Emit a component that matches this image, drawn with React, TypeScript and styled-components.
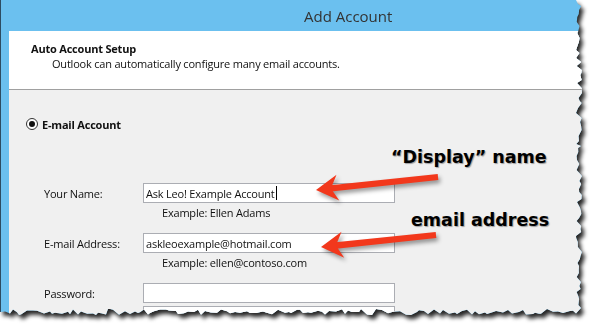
import React from "react";
import styled, { createGlobalStyle } from "styled-components";

const GlobalStyle = createGlobalStyle`
  html, body {
    margin: 0;
    padding: 0;
    background: #ffffff;
  }
  body {
    font-family: "Open Sans", "Noto Sans", sans-serif;
  }
`;

// deterministic jitter so the torn edge looks the same on every render
const seeded = (seed: number) => () => {
  seed = (seed * 16807) % 2147483647;
  return (seed - 1) / 2147483646;
};

const tornEdge = (w: number, h: number) => {
  const rnd = seeded(11);
  const pts: string[] = ["0px 0px"];
  const right = w - 10;
  const bottom = h - 11;
  for (let y = 0; y < bottom; y += 2 + Math.round(rnd() * 4)) {
    pts.push(`${(right + rnd() * 6).toFixed(1)}px ${y}px`);
  }
  for (let x = right; x > 0; x -= 2 + Math.round(rnd() * 5)) {
    pts.push(`${x}px ${(bottom + rnd() * 6).toFixed(1)}px`);
  }
  pts.push(`0px ${bottom + 3}px`);
  return `polygon(${pts.join(", ")})`;
};

const Page = styled.div`
  position: relative;
  width: 592px;
  height: 329px;
  overflow: hidden;
`;

const Shadow = styled.div`
  width: 586px;
  height: 320px;
  filter: drop-shadow(3px 4px 2px rgba(0, 0, 0, 0.85));
`;

const Window = styled.div`
  width: 100%;
  height: 100%;
  display: flex;
  flex-direction: column;
  box-sizing: border-box;
  background: #6bc0ef;
  border-left: 1px solid #2d4c62;
`;

const TitleBar = styled.div`
  height: 31px;
  flex: none;
  display: flex;
  align-items: center;
  padding-left: 303px;
  font-family: "Open Sans", sans-serif;
  font-size: 15px;
  color: #333333;
`;

const Body = styled.div`
  flex: 1;
  margin-left: 8px;
  background: #f0f0f0;
  display: flex;
  flex-direction: column;
  font-size: 11px;
  letter-spacing: -0.2px;
  color: #111111;
`;

const Header = styled.div`
  height: 59px;
  box-sizing: border-box;
  background: #ffffff;
  border-bottom: 1px solid #a0a0a0;
  padding: 10px 0 0 22px;
  line-height: 15px;
`;

const HeaderTitle = styled.div`
  font-weight: 700;
`;

const HeaderText = styled.div`
  padding-left: 21px;
`;

const Content = styled.div`
  padding: 27px 0 0 17px;
`;

const RadioRow = styled.div`
  display: flex;
  align-items: center;
  gap: 4px;
  font-weight: 700;
  height: 14px;
`;

const Radio = styled.span`
  width: 12px;
  height: 12px;
  box-sizing: border-box;
  border: 1px solid #333333;
  border-radius: 50%;
  background: #ffffff;
  display: flex;
  align-items: center;
  justify-content: center;
  &::after {
    content: "";
    width: 6px;
    height: 6px;
    border-radius: 50%;
    background: #111111;
  }
`;

const Form = styled.div`
  padding: 52px 0 0 18px;
  display: flex;
  flex-direction: column;
`;

const Field = styled.div<{ $gap: number }>`
  display: grid;
  grid-template-columns: 99px 252px;
  grid-template-rows: 20px auto;
  margin-bottom: ${p => p.$gap}px;
`;

const Label = styled.div`
  display: flex;
  align-items: center;
`;

const TextBox = styled.div`
  box-sizing: border-box;
  height: 20px;
  background: #ffffff;
  border: 1px solid #abadb3;
  padding-left: 2px;
  display: flex;
  align-items: center;
  white-space: nowrap;
`;

const Caret = styled.span`
  display: inline-block;
  width: 1px;
  height: 14px;
  background: #000000;
  margin-left: 1px;
`;

const Hint = styled.div`
  grid-column: 2;
  padding: 2px 0 0 19px;
  line-height: 16px;
`;

const Note = styled.div<{ $x: number; $y: number }>`
  position: absolute;
  left: ${p => p.$x}px;
  top: ${p => p.$y}px;
  font-family: "DejaVu Sans", Verdana, sans-serif;
  font-weight: 700;
  font-size: 17.5px;
  color: #000000;
  white-space: nowrap;
  text-shadow: 1px 1px 1px rgba(0, 0, 0, 0.35);
`;

const Arrows = styled.svg`
  position: absolute;
  left: 0;
  top: 0;
  filter: drop-shadow(2px 3px 2px rgba(0, 0, 0, 0.4));
`;

const Arrow = ({ tip, tail }: { tip: [number, number]; tail: [number, number] }) => {
  const dx = tail[0] - tip[0];
  const dy = tail[1] - tip[1];
  const len = Math.hypot(dx, dy);
  const ux = dx / len;
  const uy = dy / len;
  const nx = -uy;
  const ny = ux;
  const at = (along: number, side: number) =>
    `${tip[0] + ux * along + nx * side},${tip[1] + uy * along + ny * side}`;
  return (
    <g fill="#f2381c">
      <polygon
        points={[at(15, 3.2), at(len, 3), at(len, -3), at(15, -3.2)].join(" ")}
      />
      <polygon
        points={[at(0, 0), at(22, 13), at(15, 0), at(22, -13)].join(" ")}
      />
    </g>
  );
};

const fields = [
  { label: "Your Name:", value: "Ask Leo! Example Account", hint: "Example: Ellen Adams", caret: true, gap: 12 },
  { label: "E-mail Address:", value: "askleoexample@hotmail.com", hint: "Example: ellen@contoso.com", gap: 12 },
  { label: "Password:", value: "", gap: 3 },
  { label: "Retype Password:", value: "", gap: 0 }
];

const App: React.FunctionComponent = () => {
  const clip = tornEdge(586, 320);
  return (
    <Page>
      <GlobalStyle />
      <Shadow>
        <Window style={{ clipPath: clip }}>
          <TitleBar>Add Account</TitleBar>
          <Body>
            <Header>
              <HeaderTitle>Auto Account Setup</HeaderTitle>
              <HeaderText>Outlook can automatically configure many email accounts.</HeaderText>
            </Header>
            <Content>
              <RadioRow>
                <Radio />
                E-mail Account
              </RadioRow>
              <Form>
                {fields.map(f => (
                  <Field key={f.label} $gap={f.gap}>
                    <Label>{f.label}</Label>
                    <TextBox>
                      {f.value}
                      {f.caret && <Caret />}
                    </TextBox>
                    {f.hint && <Hint>{f.hint}</Hint>}
                  </Field>
                ))}
              </Form>
            </Content>
          </Body>
        </Window>
      </Shadow>
      <Note $x={391} $y={147}>“Display” name</Note>
      <Note $x={411} $y={210}>email address</Note>
      <Arrows width="592" height="329" viewBox="0 0 592 329">
        <Arrow tip={[316, 190]} tail={[438, 177]} />
        <Arrow tip={[321, 247]} tail={[436, 235]} />
      </Arrows>
    </Page>
  );
};

export default App;
